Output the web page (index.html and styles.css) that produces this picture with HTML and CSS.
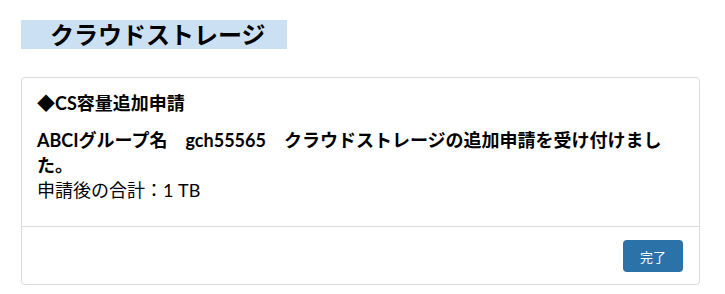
FILE: index.html
```html
<!DOCTYPE html>
<html lang="ja">
<head>
<meta charset="utf-8">
<link rel="stylesheet" href="styles.css">
</head>
<body>
<div class="page">
  <h1 class="page-title">クラウドストレージ</h1>
  <div class="card">
    <div class="card-body">
      <h2 class="card-title">◆CS容量追加申請</h2>
      <p class="message"><strong>ABCIグループ名　gch55565　クラウドストレージの追加申請を受け付けました。</strong><br>申請後の合計：1 TB</p>
    </div>
    <div class="card-footer">
      <button class="btn-primary" type="button">完了</button>
    </div>
  </div>
</div>
</body>
</html>
```
FILE: styles.css
```css
html, body {
  margin: 0;
  padding: 0;
  background: #fff;
}
body {
  font-family: Lato, "Noto Sans CJK JP", sans-serif;
  color: #000;
}
.page {
  padding: 20px 25px 0 21px;
}
.page-title {
  margin: 0;
  width: 266px;
  box-sizing: border-box;
  height: 29px;
  padding-left: 29px;
  background: #cce0f4;
  font-size: 24px;
  line-height: 29px;
  font-weight: 700;
}
.card {
  margin-top: 28px;
  width: 679px;
  box-sizing: border-box;
  border: 1px solid #dcdcdc;
  border-radius: 4px;
}
.card-body {
  padding: 13px 15px 23px 15px;
}
.card-title {
  margin: 0 0 13px 0;
  font-size: 18px;
  line-height: 24px;
  font-weight: 700;
}
.message {
  margin: 0;
  font-size: 18px;
  line-height: 25px;
}
.message strong {
  font-weight: 700;
}
.card-footer {
  border-top: 1px solid #dcdcdc;
  padding: 13px 16px 12px 0;
  display: flex;
  justify-content: flex-end;
}
.btn-primary {
  height: 32px;
  width: 60px;
  border: none;
  border-radius: 4px;
  background: #2a72a8;
  color: #fff;
  font-family: Lato, "Noto Sans CJK JP", sans-serif;
  font-size: 13px;
  padding: 0;
}
```
